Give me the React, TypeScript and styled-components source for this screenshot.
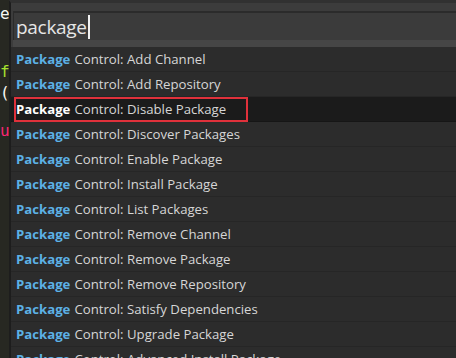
import React, { FC } from 'react'
import styled, { createGlobalStyle } from 'styled-components'

const GlobalStyle = createGlobalStyle`
  html, body {
    margin: 0;
    padding: 0;
    background: #272822;
    overflow: hidden;
  }
`

const Screen = styled.div`
  display: flex;
  width: 456px;
  height: 358px;
  overflow: hidden;
  font-family: "Open Sans", "Noto Sans", sans-serif;
`

const Gutter = styled.div`
  width: 9px;
  flex: none;
  background: #272822;
  overflow: hidden;
  font-family: "DejaVu Sans Mono", monospace;
  font-size: 16px;
  line-height: 20px;
`

const CodeChar = styled.div<{ $top: number; $color: string }>`
  margin-top: ${p => p.$top}px;
  height: 20px;
  color: ${p => p.$color};
  white-space: nowrap;
`

const Panel = styled.div`
  flex: 1;
  display: flex;
  flex-direction: column;
  background: #3b3b3b;
  border-left: 2px solid #1d1d1d;
  border-top: 3px solid #313131;
  min-width: 0;
`

const Header = styled.div`
  padding: 8px 0 0 2px;
  background: #3c3c3c;
`

const Input = styled.div`
  height: 27px;
  background: #3b3b3b;
  border-top: 2px solid #2b2b2b;
  border-left: 1px solid #2b2b2b;
  padding-left: 2px;
  display: flex;
  align-items: center;
  color: #e6e6e6;
  font-size: 19px;
  letter-spacing: -0.3px;
`

const Caret = styled.span`
  display: inline-block;
  width: 2px;
  height: 24px;
  margin-left: 1px;
  background: #f0f0f0;
`

const Band = styled.div`
  height: 7px;
  background: #464646;
`

const List = styled.ul`
  list-style: none;
  margin: 0;
  padding: 0;
`

const Row = styled.li<{ $selected?: boolean }>`
  height: 25px;
  box-sizing: border-box;
  border-bottom: 1px solid ${p => (p.$selected ? '#161616' : '#262626')};
  background: ${p => (p.$selected ? '#1b1b1b' : '#2c2c2c')};
  display: flex;
  align-items: center;
  padding-left: 3px;
`

const Label = styled.span<{ $marked?: boolean }>`
  box-sizing: border-box;
  height: 25px;
  width: 234px;
  display: flex;
  align-items: center;
  padding-left: 0;
  border: 2px solid ${p => (p.$marked ? '#e0313b' : 'transparent')};
  font-size: 13.2px;
  color: #d6d6d6;
  white-space: nowrap;
`

const Match = styled.b<{ $selected?: boolean }>`
  font-weight: 700;
  color: ${p => (p.$selected ? '#ffffff' : '#5cb1e6')};
  margin-right: 4px;
`

const items = [
  'Add Channel',
  'Add Repository',
  'Disable Package',
  'Discover Packages',
  'Enable Package',
  'Install Package',
  'List Packages',
  'Remove Channel',
  'Remove Package',
  'Remove Repository',
  'Satisfy Dependencies',
  'Upgrade Package',
  'Advanced Install Package',
]

const code = [
  { ch: 'e', top: 4, color: '#f8f8f2' },
  { ch: 'f', top: 38, color: '#a6e22e' },
  { ch: '(', top: 1, color: '#f8f8f2' },
  { ch: 'u', top: 18, color: '#f92672' },
]

const App: FC = () => {
  const selected = 2
  return (
    <>
      <GlobalStyle />
      <Screen>
        <Gutter>
          {code.map((c, i) => (
            <CodeChar key={i} $top={c.top} $color={c.color}>{c.ch}</CodeChar>
          ))}
        </Gutter>
        <Panel>
          <Header>
            <Input>
              package<Caret />
            </Input>
            <Band />
          </Header>
          <List>
            {items.map((name, i) => (
              <Row key={name} $selected={i === selected}>
                <Label $marked={i === selected}>
                  <Match $selected={i === selected}>Package</Match>Control: {name}
                </Label>
              </Row>
            ))}
          </List>
        </Panel>
      </Screen>
    </>
  )
}

export default App
